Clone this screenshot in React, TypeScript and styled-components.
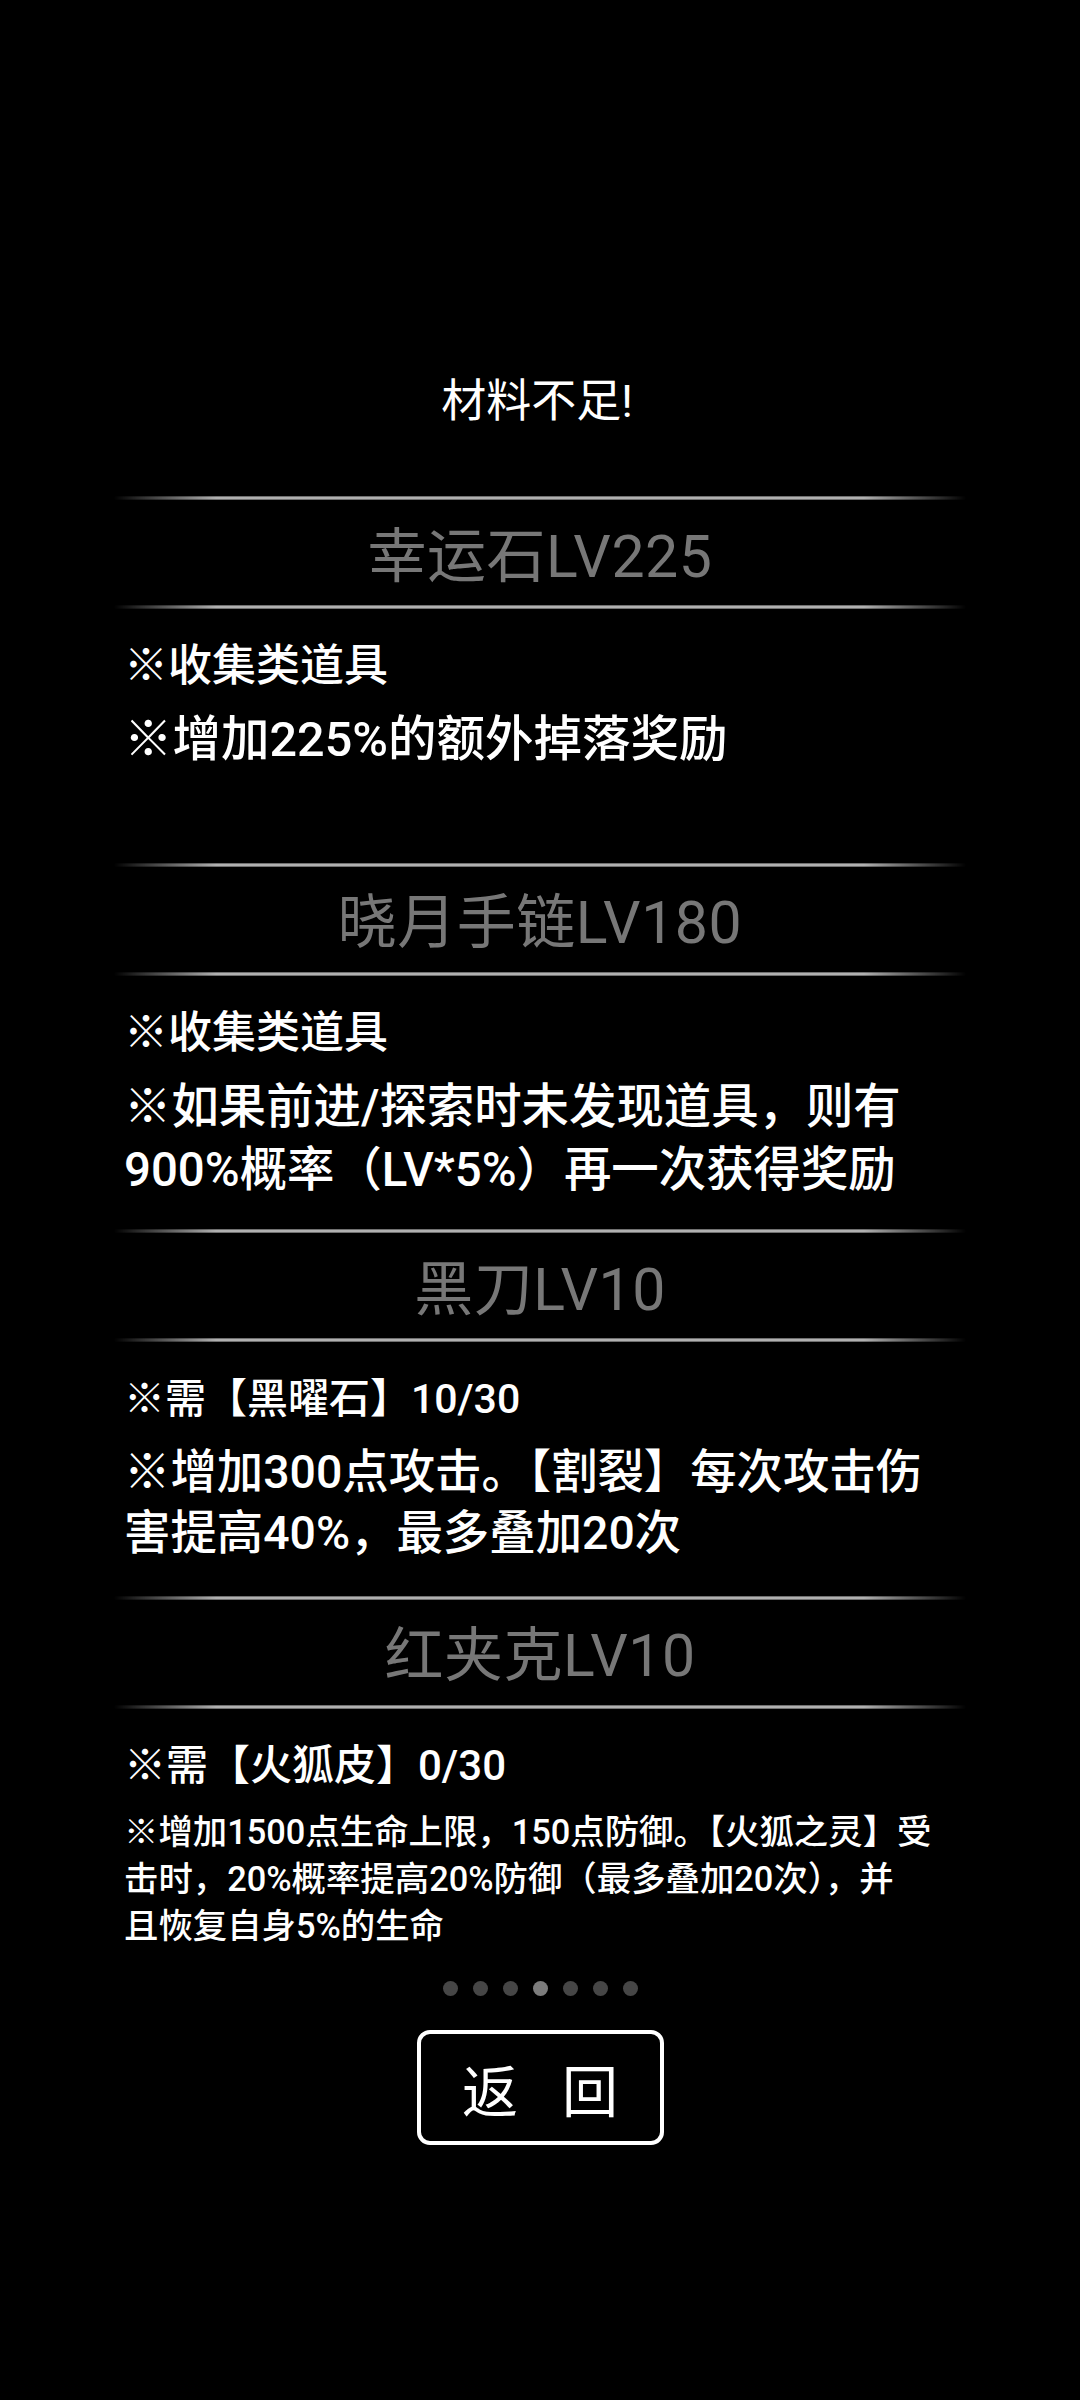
import styled, { createGlobalStyle } from 'styled-components'

const GlobalStyle = createGlobalStyle`
  html, body {
    margin: 0;
    padding: 0;
    background: #000;
  }
  body {
    font-family: Roboto, "Noto Sans CJK SC", sans-serif;
    color: #fff;
  }
`

const Screen = styled.div`
  width: 1080px;
  height: 2400px;
  background: #000;
  display: flex;
  flex-direction: column;
  align-items: center;
  padding-top: 372px;
  box-sizing: border-box;
`

const Notice = styled.div`
  height: 60px;
  line-height: 60px;
  font-size: 45px;
  color: #fff;
  margin-bottom: 64px;
  padding-right: 6px;
`

const List = styled.div`
  width: 100%;
  display: flex;
  flex-direction: column;
`

const Item = styled.section`
  height: 366.5px;
  display: flex;
  flex-direction: column;
`

const Divider = styled.div`
  align-self: center;
  width: 852px;
  height: 4px;
  flex-shrink: 0;
  background: linear-gradient(180deg, #505050 0%, #d0d0d0 50%, #505050 100%);
  mask-image: linear-gradient(90deg, transparent 0%, #000 12%, #000 88%, transparent 100%);
  -webkit-mask-image: linear-gradient(90deg, transparent 0%, #000 12%, #000 88%, transparent 100%);
`

const Name = styled.div`
  height: 105px;
  display: flex;
  align-items: center;
  justify-content: center;
  font-size: 59px;
  letter-spacing: 0.5px;
  color: #777;
  padding-bottom: 3px;
  box-sizing: border-box;
`

const Desc = styled.div`
  padding: 26px 124px 0;
  display: flex;
  flex-direction: column;
  gap: 12px;
`

const Line = styled.p<{ $size: number; $lh: number }>`
  margin: 0;
  font-size: ${(p) => p.$size}px;
  line-height: ${(p) => p.$lh}px;
  font-weight: 500;
  color: #fff;
  white-space: pre-line;
`

const Dots = styled.div`
  margin-top: 19px;
  display: flex;
  gap: 15px;
`

const Dot = styled.span<{ $active?: boolean }>`
  width: 15px;
  height: 15px;
  border-radius: 50%;
  background: ${(p) => (p.$active ? '#7c7c7c' : '#464646')};
`

const BackButton = styled.button`
  margin-top: 34px;
  width: 247px;
  height: 115px;
  box-sizing: border-box;
  border: 4px solid #fff;
  border-radius: 13px;
  background: #000;
  color: #fff;
  font-family: "Noto Sans CJK SC", sans-serif;
  font-size: 56px;
  display: flex;
  align-items: center;
  justify-content: center;
  gap: 44px;
  padding: 0;
  cursor: pointer;
`

type Para = { text: string; size: number; lh: number }

const items: { name: string; desc: Para[] }[] = [
  {
    name: '幸运石LV225',
    desc: [
      { text: '※收集类道具', size: 44, lh: 62 },
      { text: '※增加225%的额外掉落奖励', size: 48.5, lh: 62 },
    ],
  },
  {
    name: '晓月手链LV180',
    desc: [
      { text: '※收集类道具', size: 44, lh: 62 },
      { text: '※如果前进/探索时未发现道具，则有900%概率（LV*5%）再一次获得奖励', size: 47.4, lh: 63 },
    ],
  },
  {
    name: '黑刀LV10',
    desc: [
      { text: '※需【黑曜石】10/30', size: 41, lh: 62 },
      { text: '※增加300点攻击。【割裂】每次攻击伤害提高40%，最多叠加20次', size: 46.4, lh: 61 },
    ],
  },
  {
    name: '红夹克LV10',
    desc: [
      { text: '※需【火狐皮】0/30', size: 42, lh: 62 },
      {
        text: '※增加1500点生命上限，150点防御。【火狐之灵】受击时，20%概率提高20%防御（最多叠加20次），并\n且恢复自身5%的生命',
        size: 34.4,
        lh: 47,
      },
    ],
  },
]

export default function App() {
  return (
    <>
      <GlobalStyle />
      <Screen>
        <Notice>材料不足!</Notice>
        <List>
          {items.map((item) => (
            <Item key={item.name}>
              <Divider />
              <Name>{item.name}</Name>
              <Divider />
              <Desc>
                {item.desc.map((d) => (
                  <Line key={d.text} $size={d.size} $lh={d.lh}>
                    {d.text}
                  </Line>
                ))}
              </Desc>
            </Item>
          ))}
        </List>
        <Dots>
          {Array.from({ length: 7 }).map((_, i) => (
            <Dot key={i} $active={i === 3} />
          ))}
        </Dots>
        <BackButton>
          <span>返</span>
          <span>回</span>
        </BackButton>
      </Screen>
    </>
  )
}
